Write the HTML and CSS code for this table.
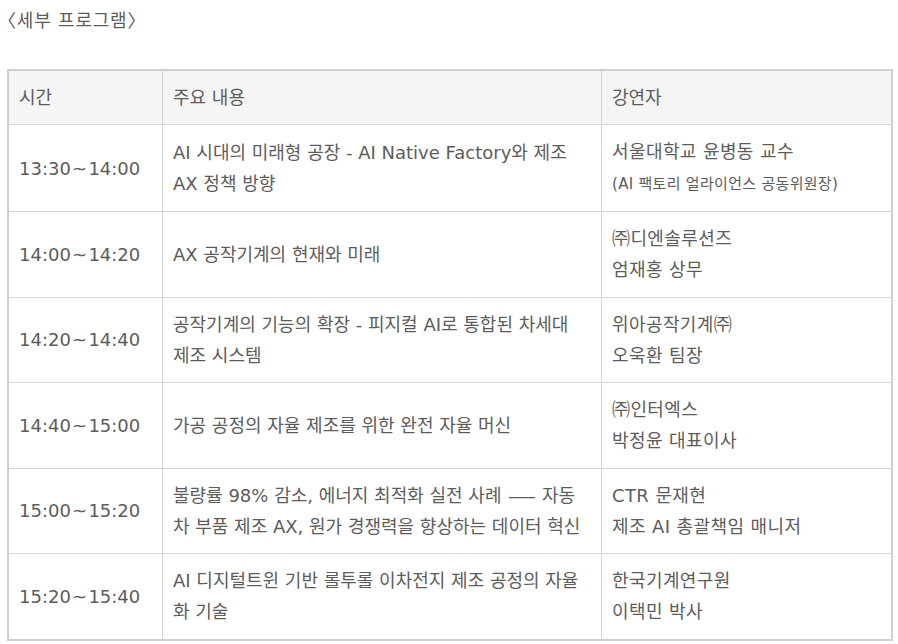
FILE: index.html
```html
<!DOCTYPE html>
<html lang="ko">
<head>
<meta charset="utf-8">
<link rel="stylesheet" href="styles.css">
</head>
<body>
<div class="page">
  <p class="title">〈세부 프로그램〉</p>
  <table class="program">
    <colgroup>
      <col class="c-time">
      <col class="c-topic">
      <col class="c-speaker">
    </colgroup>
    <thead>
      <tr><th>시간</th><th>주요 내용</th><th>강연자</th></tr>
    </thead>
    <tbody>
      <tr>
        <td class="time">13:30 ~ 14:00</td>
        <td class="topic">AI 시대의 미래형 공장 - AI Native Factory와 제조 AX 정책 방향</td>
        <td class="speaker">서울대학교 윤병동 교수<br><span class="sub">(AI 팩토리 얼라이언스 공동위원장)</span></td>
      </tr>
      <tr>
        <td class="time">14:00 ~ 14:20</td>
        <td class="topic">AX 공작기계의 현재와 미래</td>
        <td class="speaker">㈜디엔솔루션즈<br>엄재홍 상무</td>
      </tr>
      <tr>
        <td class="time">14:20 ~ 14:40</td>
        <td class="topic">공작기계의 기능의 확장 - 피지컬 AI로 통합된 차세대 제조 시스템</td>
        <td class="speaker">위아공작기계㈜<br>오욱환 팀장</td>
      </tr>
      <tr>
        <td class="time">14:40 ~ 15:00</td>
        <td class="topic">가공 공정의 자율 제조를 위한 완전 자율 머신</td>
        <td class="speaker">㈜인터엑스<br>박정윤 대표이사</td>
      </tr>
      <tr>
        <td class="time">15:00 ~ 15:20</td>
        <td class="topic">불량률 98% 감소, 에너지 최적화 실전 사례 <span class="dash">—</span> 자동차 부품 제조 AX, 원가 경쟁력을 향상하는 데이터 혁신</td>
        <td class="speaker">CTR 문재현<br>제조 AI 총괄책임 매니저</td>
      </tr>
      <tr>
        <td class="time">15:20 ~ 15:40</td>
        <td class="topic">AI 디지털트윈 기반 롤투롤 이차전지 제조 공정의 자율화 기술</td>
        <td class="speaker">한국기계연구원<br>이택민 박사</td>
      </tr>
    </tbody>
  </table>
</div>
</body>
</html>
```

FILE: styles.css
```css
html, body {
  margin: 0;
  padding: 0;
  background: #ffffff;
}

.page {
  padding: 6px 7px 0 7px;
  font-family: "DejaVu Sans", "Noto Sans CJK KR", sans-serif;
  color: #5c5c5c;
}

.title {
  margin: 0 0 33px 0;
  font-size: 18px;
  line-height: 30px;
  letter-spacing: 0.8px;
  font-feature-settings: "halt";
}

.program {
  width: 886px;
  table-layout: fixed;
  border-collapse: separate;
  border-spacing: 0;
  border: 2px solid #cfcfcf;
  font-size: 18px;
  line-height: 31px;
}

.c-time { width: 154px; }
.c-topic { width: 439px; }
.c-speaker { width: auto; }

.program th,
.program td {
  padding: 11px 13px 11px 10px;
  border-right: 1px solid #d6d6d6;
  border-bottom: 1px solid #d6d6d6;
  text-align: left;
  vertical-align: middle;
  font-weight: normal;
}

.program th {
  background: #f5f5f5;
}

.program th:last-child,
.program td:last-child {
  border-right: none;
}

.program tbody tr:last-child td {
  border-bottom: none;
}

.program td {
  height: 62.5px;
}

.time {
  white-space: nowrap;
  word-spacing: -4.5px;
}

.topic {
  text-align: justify;
}

.speaker {
  letter-spacing: 0.4px;
}

.dash {
  display: inline-block;
  width: 18px;
  margin: 0 5.5px;
  transform: scaleX(1.6);
}

.sub {
  font-size: 15px;
  letter-spacing: 0.3px;
}
```
